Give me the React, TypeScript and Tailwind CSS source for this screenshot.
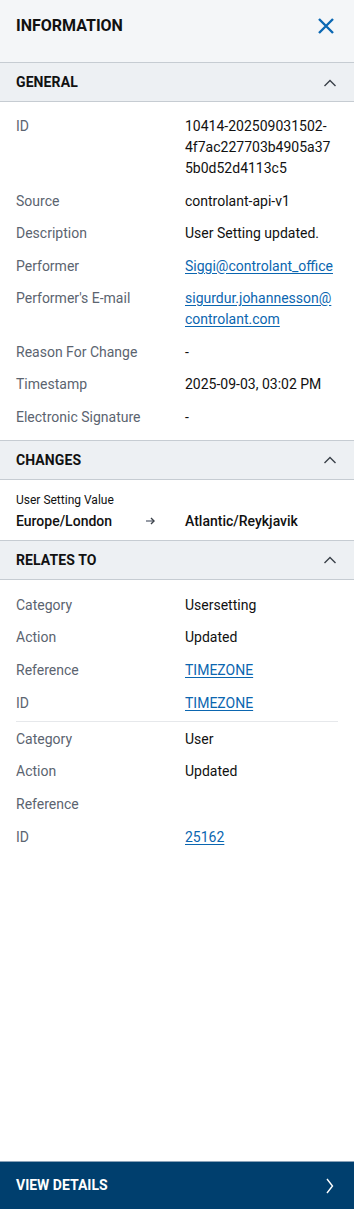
import React from "react";

const ChevronUp = () => (
  <svg width="14" height="8" viewBox="0 0 14 8" fill="none">
    <path d="M1.5 7L7 1.5L12.5 7" stroke="#3a4048" strokeWidth="1.4" />
  </svg>
);

const SectionHeader = ({ title }: { title: string }) => (
  <div className="flex h-[39px] items-center justify-between border-b border-[#c6ccd2] bg-[#edf0f3] pl-4 pr-[17px] pt-[1px]">
    <span className="text-[14px] font-bold tracking-[0.1px] text-[#111]">{title}</span>
    <ChevronUp />
  </div>
);

const Row = ({ label, children }: { label: string; children?: React.ReactNode }) => (
  <div className="grid grid-cols-[169px_1fr] text-[14px] leading-[21px]">
    <span className="text-[#5b6470]">{label}</span>
    <div className="text-[#111]">{children}</div>
  </div>
);

const Link = ({ children }: { children: React.ReactNode }) => (
  <span className="text-[#0b66b0] underline underline-offset-[2px]">{children}</span>
);

export default function App() {
  return (
    <div
      className="flex h-[1209px] w-[354px] flex-col bg-white"
      style={{ fontFamily: "Roboto, 'Noto Sans', sans-serif" }}
    >
      <div className="flex h-[63px] items-center justify-between border-b border-[#c6ccd2] bg-[#f4f6f8] pb-[11px] pl-4 pr-[19px]">
        <span className="text-[16px] font-bold text-[#111]">INFORMATION</span>
        <svg width="18" height="18" viewBox="0 0 18 18" fill="none">
          <path d="M2 2L16 16M16 2L2 16" stroke="#0b68b3" strokeWidth="2.4" />
        </svg>
      </div>

      <SectionHeader title="GENERAL" />
      <div className="flex flex-col gap-y-[11.5px] border-b border-[#c6ccd2] px-4 pb-[12px] pt-[14px]">
        <Row label="ID">
          10414-202509031502-
          <br />
          4f7ac227703b4905a37
          <br />
          5b0d52d4113c5
        </Row>
        <Row label="Source">controlant-api-v1</Row>
        <Row label="Description">User Setting updated.</Row>
        <Row label="Performer">
          <Link>Siggi@controlant_office</Link>
        </Row>
        <Row label="Performer's E-mail">
          <Link>
            sigurdur.johannesson@
            <br />
            controlant.com
          </Link>
        </Row>
        <Row label="Reason For Change">-</Row>
        <Row label="Timestamp">2025-09-03, 03:02 PM</Row>
        <Row label="Electronic Signature">-</Row>
      </div>

      <SectionHeader title="CHANGES" />
      <div className="border-b border-[#c6ccd2] px-4 pb-[8px] pt-[12px]">
        <div className="text-[12px] leading-[16px] text-[#111]">User Setting Value</div>
        <div className="mt-[3px] flex items-center text-[14px] font-medium leading-[21px] text-[#111]">
          <span className="w-[130px]">Europe/London</span>
          <svg width="9" height="8" viewBox="0 0 9 8" fill="none">
            <path d="M0 4H7.5" stroke="#6b7280" strokeWidth="1.4" />
            <path d="M5 1L8 4L5 7" stroke="#3a4048" strokeWidth="1.4" />
          </svg>
          <span className="ml-[30px]">Atlantic/Reykjavik</span>
        </div>
      </div>

      <SectionHeader title="RELATES TO" />
      <div className="flex-1 px-4 pt-[15px]">
        <div className="flex flex-col gap-y-[11.7px]">
          <Row label="Category">Usersetting</Row>
          <Row label="Action">Updated</Row>
          <Row label="Reference">
            <Link>TIMEZONE</Link>
          </Row>
          <Row label="ID">
            <Link>TIMEZONE</Link>
          </Row>
        </div>
        <div className="my-[7px] h-px bg-[#e6e8eb]" />
        <div className="flex flex-col gap-y-[11.7px]">
          <Row label="Category">User</Row>
          <Row label="Action">Updated</Row>
          <Row label="Reference" />
          <Row label="ID">
            <Link>25162</Link>
          </Row>
        </div>
      </div>

      <div className="flex h-[48px] items-center justify-between border-t border-[#8aa2b8] bg-[#003f6e] pl-4 pr-[20px]">
        <span className="text-[14px] font-bold text-white">VIEW DETAILS</span>
        <svg width="8" height="16" viewBox="0 0 8 16" fill="none">
          <path d="M1 1L6.5 8L1 15" stroke="#ffffff" strokeWidth="1.4" />
        </svg>
      </div>
    </div>
  );
}
